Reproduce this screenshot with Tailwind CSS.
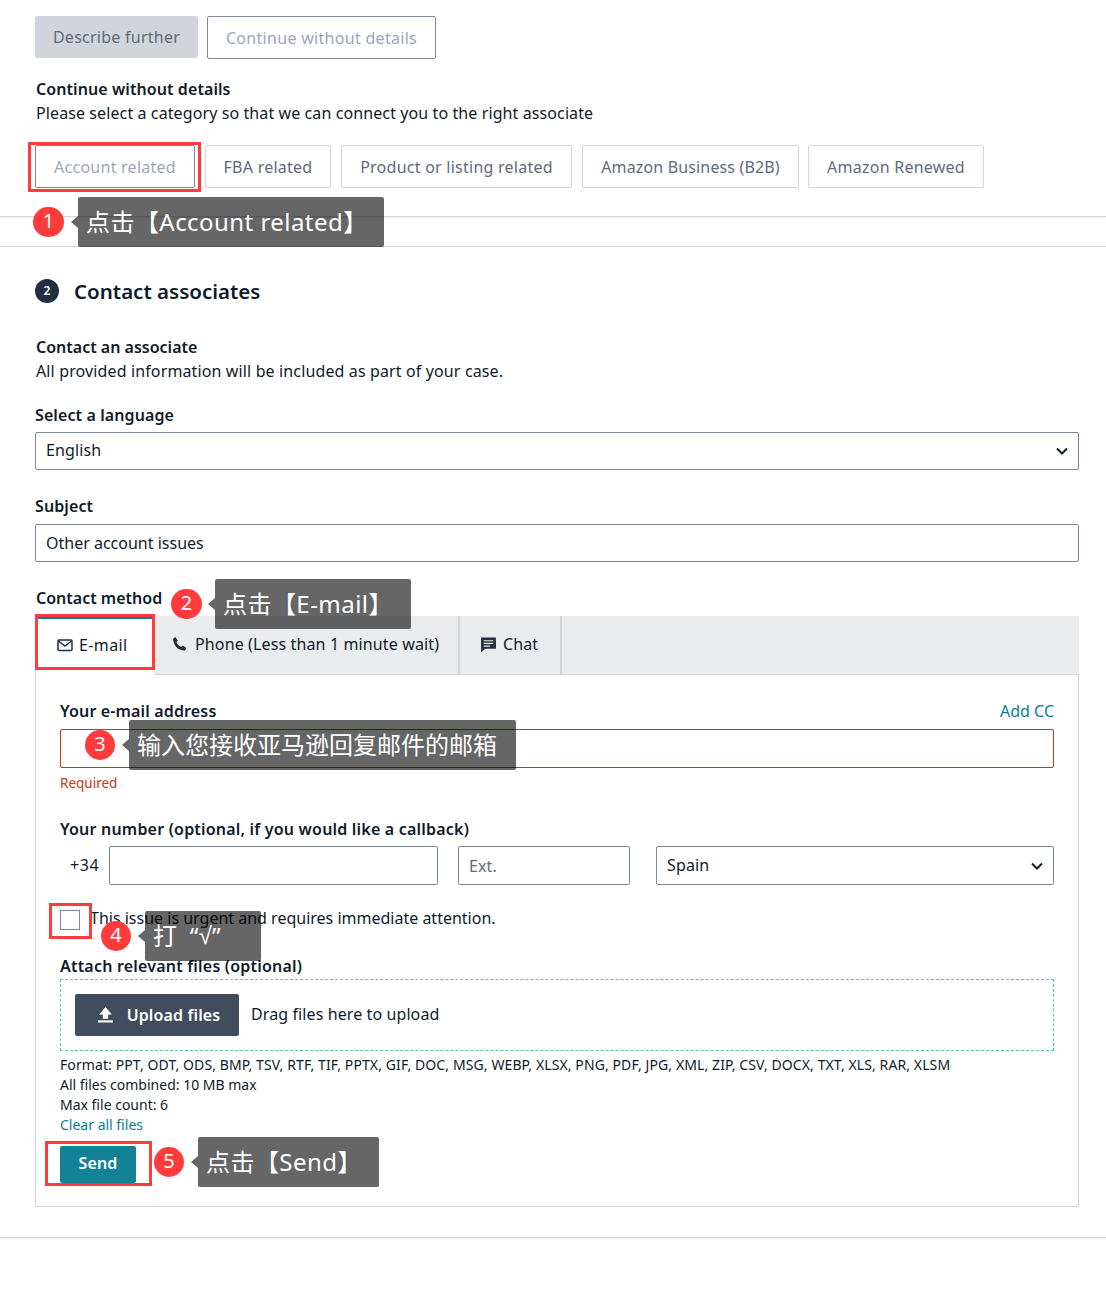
<!DOCTYPE html>
<html lang="en"><head><meta charset="utf-8">
<script src="https://cdn.jsdelivr.net/npm/@tailwindcss/browser@4"></script>
</head>
<body class="bg-white">
<div class="relative w-[1106px] h-[1297px] overflow-hidden text-[#0f1b2a] text-[16px] leading-[24px] tracking-[0.13px] font-['Noto_Sans','Noto_Sans_CJK_SC',sans-serif]">
  <div class="pt-4 px-[35px]">
    <div class="flex gap-[9px] tracking-[0.25px]">
      <div class="h-[42px] w-[163px] rounded-[2px] bg-[#d1d5db] flex items-center justify-center text-[#5f6b7a]">Describe further</div>
      <div class="h-[43px] w-[229px] rounded-[2px] border border-[#7d8998] flex items-center justify-center text-[#9ba7b6] tracking-[0.3px]">Continue without details</div>
    </div>
    <div class="mt-[18px] pl-px font-semibold tracking-[0.08px]">Continue without details</div>
    <div class="pl-px tracking-[0.1px]">Please select a category so that we can connect you to the right associate</div>
    <div class="mt-[20px] flex gap-[10px] text-[#5f6b7a] tracking-[0.25px]">
      <div class="h-[43px] w-[160px] rounded-[2px] border border-[#7d8998] flex items-center justify-center text-[#9ba7b6]">Account related</div>
      <div class="h-[43px] w-[126px] rounded-[2px] border border-[#d1d5db] flex items-center justify-center">FBA related</div>
      <div class="h-[43px] w-[231px] rounded-[2px] border border-[#d1d5db] flex items-center justify-center">Product or listing related</div>
      <div class="h-[43px] w-[217px] rounded-[2px] border border-[#d1d5db] flex items-center justify-center tracking-[0.15px]">Amazon Business (B2B)</div>
      <div class="-ml-px h-[43px] w-[176px] rounded-[2px] border border-[#d1d5db] flex items-center justify-center">Amazon Renewed</div>
    </div>
  </div>
  <div class="mt-[28px] h-px bg-[#d1d5db] shadow-[0_1px_2px_rgba(0,0,0,0.12)]"></div>
  <div class="mt-[29px] h-px bg-[#d1d5db]"></div>

  <div class="px-[35px] w-[1079px] box-content pr-0">
    <div class="mt-[30px] flex items-center gap-[15px]">
      <div class="w-6 h-6 rounded-full bg-[#232f3e] text-white text-[12px] font-semibold flex items-center justify-center">2</div>
      <div class="text-[20.5px] leading-[28px] font-semibold tracking-normal">Contact associates</div>
    </div>
    <div class="mt-[30px] pl-px font-semibold tracking-normal">Contact an associate</div>
    <div class="pl-px">All provided information will be included as part of your case.</div>
    <div class="mt-[20px] font-semibold tracking-[0.1px]">Select a language</div>
    <div class="mt-[5px] h-[38px] w-[1044px] rounded-[2px] border border-[#7d8998] pl-[10px] pr-[9px] flex items-center justify-between">
      <span class="-mt-[2px]">English</span>
      <svg class="w-[14px] h-[14px]" viewBox="0 0 14 14" fill="none" stroke="#0f1b2a" stroke-width="2"><path d="M2 4.5l5 5 5-5"/></svg>
    </div>
    <div class="mt-[24px] font-semibold tracking-[0.1px]">Subject</div>
    <div class="mt-[6px] h-[38px] w-[1044px] rounded-[2px] border border-[#7d8998] pl-[10px] flex items-center tracking-normal">Other account issues</div>
    <div class="mt-[24px] pl-px font-semibold tracking-normal">Contact method</div>

    <div class="w-[1044px] mt-[6px]">
      <div class="h-[59px] flex bg-[#e9ebed] border-b border-[#d1d5db]">
        <div class="w-[120px] h-[59px] bg-white border-t-[3px] border-[#067f8e] border-l border-l-[#d1d5db] flex items-center pl-[21px] pb-[5px] gap-[6px] tracking-[0.4px]">
          <svg class="w-4 h-4" viewBox="0 0 16 16" fill="none" stroke="#232f3e" stroke-width="1.5"><rect x="1" y="3" width="14" height="10.5" rx="1"/><path d="M1.5 4l6.5 5 6.5-5"/></svg>
          <span>E-mail</span>
        </div>
        <div class="w-[305px] border-r-2 border-[#d1d5db] flex items-center pl-[17px] pb-[2px] gap-[7px]">
          <svg class="w-4 h-4" viewBox="0 0 16 16" fill="#232f3e"><path d="M3.2 1l2.6 3.4-1.4 1.8c.8 2 2.6 3.8 4.6 4.6l1.8-1.4 3.6 2.6-1.4 2.4c-6.4.6-12.2-5.4-11.8-12z"/></svg>
          <span>Phone (Less than 1 minute wait)</span>
        </div>
        <div class="w-[102px] border-r-2 border-[#d1d5db] flex items-center pl-[20px] pb-[2px] gap-[6px]">
          <svg class="w-[17px] h-[17px]" viewBox="0 0 16 16" fill="#232f3e"><path d="M1 1.5h14v10.5H5l-4 3.2z"/><path d="M3.5 4.5h9M3.5 7h9M3.5 9.5h6" stroke="#e9ebed" stroke-width="1.1"/></svg>
          <span>Chat</span>
        </div>
      </div>
      <div class="h-[532px] border border-t-0 border-[#d1d5db] px-6 relative">
        <div class="pt-[24px] flex justify-between font-semibold tracking-[0.15px]"><span>Your e-mail address</span><span class="font-normal text-[#0a7f8f] tracking-normal">Add CC</span></div>
        <div class="mt-[6px] h-[39px] rounded-[2px] border border-[#d13212]"></div>
        <div class="mt-[5px] text-[13.5px] leading-[20px] text-[#d13212] tracking-normal">Required</div>
        <div class="mt-[24px] font-semibold tracking-[0.2px]">Your number (optional, if you would like a callback)</div>
        <div class="mt-[5px] flex items-center">
          <span class="w-[49px] pl-[10px] -mt-[2px] tracking-[0.6px]">+34</span>
          <div class="h-[39px] w-[329px] rounded-[2px] border border-[#7d8998]"></div>
          <div class="ml-[20px] h-[39px] w-[172px] rounded-[2px] border border-[#7d8998] pl-[10px] flex items-center text-[#5f6b7a]">Ext.</div>
          <div class="ml-[26px] h-[39px] w-[398px] rounded-[2px] border border-[#7d8998] pl-[10px] pr-[9px] flex items-center justify-between">
            <span class="-mt-[2px]">Spain</span>
            <svg class="w-[14px] h-[14px]" viewBox="0 0 14 14" fill="none" stroke="#0f1b2a" stroke-width="2"><path d="M2 4.5l5 5 5-5"/></svg>
          </div>
        </div>
        <div class="mt-[21px] flex items-center h-6">
          <div class="mt-[3px] w-[20px] h-[20px] border border-[#7d8998] bg-white"></div>
          <span class="ml-[10px] tracking-normal">This issue is urgent and requires immediate attention.</span>
        </div>
        <div class="mt-[24px] font-semibold tracking-[0.2px]">Attach relevant files (optional)</div>
        <div class="mt-px h-[72px] border border-dashed border-[#5bc0c8] pl-[14px] flex items-center gap-3">
          <div class="w-[164px] h-[42px] rounded-[2px] bg-[#414d5c] text-white font-semibold flex items-center justify-center gap-[13px] pl-[3px] pb-px">
            <svg class="w-[17px] h-[17px]" viewBox="0 0 16 16" fill="#fff"><path d="M8 1L2 8h3.5v4h5V8H14z"/><rect x="1" y="13.5" width="14" height="2"/></svg>
            <span>Upload files</span>
          </div>
          <span class="-mt-[2px] tracking-[0.1px]">Drag files here to upload</span>
        </div>
        <div class="mt-[4px] text-[14px] leading-[20px] tracking-[0.1px]">Format: PPT, ODT, ODS, BMP, TSV, RTF, TIF, PPTX, GIF, DOC, MSG, WEBP, XLSX, PNG, PDF, JPG, XML, ZIP, CSV, DOCX, TXT, XLS, RAR, XLSM</div>
        <div class="text-[14px] leading-[20px] tracking-normal">All files combined: 10 MB max</div>
        <div class="text-[14px] leading-[20px] tracking-normal">Max file count: 6</div>
        <div class="text-[14px] leading-[20px] tracking-normal text-[#0a7f8f]">Clear all files</div>
        <div class="mt-[11px] w-[76px] h-[37px] rounded-[2px] bg-[#148296] text-white font-semibold pb-[3px] flex items-center justify-center">Send</div>
      </div>
    </div>
  </div>
  <div class="mt-[30px] h-px bg-[#d1d5db] shadow-[0_1px_2px_rgba(0,0,0,0.12)]"></div>

  <!-- annotations -->
  <div class="absolute left-[28px] top-[142px] w-[173px] h-[50px] border-[3px] border-[#ff3b3b]"></div>
  <div class="absolute left-[35px] top-[614px] w-[120px] h-[56px] border-[3px] border-[#ff3b3b]"></div>
  <div class="absolute left-[49px] top-[903px] w-[43px] h-[36px] border-[3px] border-[#ff3b3b]"></div>
  <div class="absolute left-[45px] top-[1141px] w-[107px] h-[45px] border-[3px] border-[#ff3b3b]"></div>

  <div class="absolute left-[33px] top-[207px] w-[31px] h-[30px] rounded-full bg-[#ff3b3b] text-white text-[20px] pb-[3px] flex items-center justify-center">1</div>
  <div class="absolute left-[71px] top-[216px] w-0 h-0 border-y-[6px] border-y-transparent border-r-[7px] border-r-black/60"></div>
  <div class="absolute left-[78px] top-[197px] w-[306px] h-[50px] rounded-[2px] bg-black/60 text-white text-[24px] tracking-[0.45px] pl-[8px] flex items-center">点击【Account related】</div>

  <div class="absolute left-[171px] top-[589px] w-[31px] h-[30px] rounded-full bg-[#ff3b3b] text-white text-[20px] pb-[3px] flex items-center justify-center">2</div>
  <div class="absolute left-[208px] top-[598px] w-0 h-0 border-y-[6px] border-y-transparent border-r-[7px] border-r-black/60"></div>
  <div class="absolute left-[215px] top-[579px] w-[196px] h-[50px] rounded-[2px] bg-black/60 text-white text-[24px] tracking-[0.45px] pl-[8px] flex items-center">点击【E-mail】</div>

  <div class="absolute left-[85px] top-[730px] w-[30px] h-[30px] rounded-full bg-[#ff3b3b] text-white text-[20px] pb-[3px] flex items-center justify-center">3</div>
  <div class="absolute left-[122px] top-[739px] w-0 h-0 border-y-[6px] border-y-transparent border-r-[7px] border-r-black/60"></div>
  <div class="absolute left-[129px] top-[720px] w-[387px] h-[50px] rounded-[2px] bg-black/60 text-white text-[24px] tracking-normal pl-[8px] flex items-center">输入您接收亚马逊回复邮件的邮箱</div>

  <div class="absolute left-[101px] top-[921px] w-[30px] h-[30px] rounded-full bg-[#ff3b3b] text-white text-[20px] pb-[3px] flex items-center justify-center">4</div>
  <div class="absolute left-[138px] top-[930px] w-0 h-0 border-y-[6px] border-y-transparent border-r-[7px] border-r-black/60"></div>
  <div class="absolute left-[145px] top-[911px] w-[116px] h-[50px] rounded-[2px] bg-black/60 text-white text-[24px] pl-[8px] flex items-center whitespace-pre">打  “<span class="font-['Liberation_Sans']">√</span>”</div>

  <div class="absolute left-[154px] top-[1147px] w-[30px] h-[30px] rounded-full bg-[#ff3b3b] text-white text-[20px] pb-[3px] flex items-center justify-center">5</div>
  <div class="absolute left-[191px] top-[1156px] w-0 h-0 border-y-[6px] border-y-transparent border-r-[7px] border-r-black/60"></div>
  <div class="absolute left-[198px] top-[1137px] w-[181px] h-[50px] rounded-[2px] bg-black/60 text-white text-[24px] tracking-[0.45px] pl-[8px] flex items-center">点击【Send】</div>
</div>
</body></html>
